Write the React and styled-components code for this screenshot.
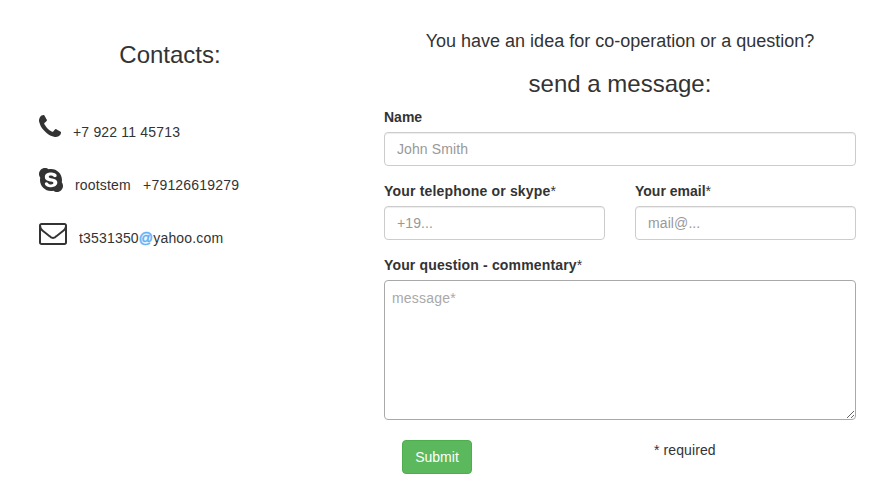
import React from "react";
import styled, { createGlobalStyle } from "styled-components";
import { FaSkype } from "react-icons/fa";

const GlobalStyle = createGlobalStyle`
  *, *::before, *::after { box-sizing: border-box; }
  body {
    margin: 0;
    background: #fff;
    color: #333;
    font-family: "Liberation Sans", Arial, sans-serif;
    font-size: 14px;
    line-height: 20px;
  }
`;

const Page = styled.main`
  display: grid;
  grid-template-columns: 262px 472px;
  column-gap: 83px;
  padding-left: 39px;
  height: 488px;
  overflow: hidden;
`;

const Contacts = styled.section`
  padding-top: 42px;
`;

const Heading = styled.h3`
  margin: 0;
  font-size: 24px;
  font-weight: 400;
  line-height: 26px;
  text-align: center;
`;

const Lead = styled.h4`
  margin: 0 0 20px;
  font-size: 18px;
  font-weight: 400;
  line-height: 20px;
  text-align: center;
`;

const ContactList = styled.ul`
  list-style: none;
  margin: 45px 0 0;
  padding: 0;
`;

const ContactRow = styled.li`
  display: flex;
  align-items: flex-start;
  gap: 12px;
  height: 53px;
`;

const Glyph = styled.svg`
  display: block;
  flex: none;
  width: ${(p) => p.$width}px;
  height: 28px;
  fill: currentColor;
`;

const SkypeGlyph = styled(FaSkype)`
  flex: none;
  width: 24px;
  height: 28px;
`;

const ContactText = styled.span`
  padding-top: 9px;
  letter-spacing: 0.18px;
  white-space: pre;
`;

const At = styled.span`
  color: #4ba6f5;
  -webkit-text-stroke: 0.5px #6db8f8;
  text-shadow: 0 0 2px #b5dafb;
`;

const Form = styled.form`
  padding-top: 31px;
`;

const Fields = styled.div`
  padding-top: 10px;
`;

const FieldRow = styled.div`
  display: grid;
  grid-template-columns: 1fr 1fr;
  column-gap: 30px;
`;

const Field = styled.div`
  display: flex;
  flex-direction: column;
  margin-bottom: 15px;
`;

const Label = styled.label`
  margin-bottom: 5px;
  font-weight: 700;
  letter-spacing: ${(p) => p.$tracking || 0}px;
`;

const Star = styled.span`
  font-weight: 400;
`;

const Input = styled.input`
  width: 100%;
  height: 34px;
  padding: 6px 12px;
  border: 1px solid #ccc;
  border-radius: 4px;
  box-shadow: inset 0 1px 1px rgba(0, 0, 0, 0.075);
  background: #fff;
  color: #555;
  font: inherit;
  letter-spacing: 0.1px;
  &::placeholder { color: #999; opacity: 1; }
`;

const Message = styled.textarea`
  display: block;
  width: 100%;
  height: 140px;
  padding: 7px;
  border: 1px solid #a9a9a9;
  border-radius: 4px;
  background: #fff;
  font: inherit;
  letter-spacing: 0.2px;
  resize: both;
  &::placeholder { color: #a9a9a9; opacity: 1; }
`;

const Footer = styled.div`
  display: flex;
  align-items: flex-start;
  padding: 5px 0 0 18px;
`;

const Submit = styled.button`
  width: 70px;
  height: 34px;
  padding: 6px 0;
  border: 1px solid #4cae4c;
  border-radius: 4px;
  background: #5cb85c;
  color: #fff;
  font: inherit;
`;

const Required = styled.span`
  margin-left: 182px;
  letter-spacing: 0.1px;
`;

const PhoneIcon = () => (
  <Glyph $width={22} viewBox="0 0 1408 1792">
    <path d="M1408 1240q0 27-10 70.5t-21 68.5q-21 50-122 106-94 51-186 51-27 0-53-3.5t-57.5-12.5-47-14.5-55.5-20.5-49-18q-98-35-175-83-127-79-264-216t-216-264q-48-77-83-175-3-9-18-49t-20.5-55.5-14.5-47-12.5-57.5-3.5-53q0-92 51-186 56-101 106-122 25-11 68.5-21t70.5-10q14 0 21 3 18 6 53 76 11 19 30 54t35 63.5 31 53.5q3 4 17.5 25t21.5 35.5 7 28.5q0 20-28.5 50t-62 55-62 53-28.5 46q0 9 5 22.5t8.5 20.5 14 24 11.5 19q76 137 174 235t235 174q2 1 19 11.5t24 14 20.5 8.5 22.5 5q18 0 46-28.5t53-62 55-62 50-28.5q14 0 28.5 7t35.5 21.5 25 17.5q25 15 53.5 31t63.5 35 54 30q70 35 76 53 3 7 3 21z" />
  </Glyph>
);

const EnvelopeIcon = () => (
  <Glyph $width={28} viewBox="0 0 1792 1792">
    <path d="M1664 1504v-768q-32 36-69 66-268 206-426 338-51 43-83 67t-86.5 48.5-102.5 24.5h-2q-48 0-102.5-24.5t-86.5-48.5-83-67q-158-132-426-338-37-30-69-66v768q0 13 9.5 22.5t22.5 9.5h1472q13 0 22.5-9.5t9.5-22.5zm0-1051v-24.5l-.5-13-3-12.5-5.5-9-9-7.5-14-2.5h-1472q-13 0-22.5 9.5t-9.5 22.5q0 168 147 284 193 152 401 317 6 5 35 29.5t46 37.5 44.5 31.5 50.5 27.5 43 9h2q20 0 43-9t50.5-27.5 44.5-31.5 46-37.5 35-29.5q208-165 401-317 54-43 100.5-115.5t46.5-131.5zm128-37v1088q0 66-47 113t-113 47h-1472q-66 0-113-47t-47-113v-1088q0-66 47-113t113-47h1472q66 0 113 47t47 113z" />
  </Glyph>
);

export default function App() {
  return (
    <>
      <GlobalStyle />
      <Page>
        <Contacts>
          <Heading>Contacts:</Heading>
          <ContactList>
            <ContactRow>
              <PhoneIcon />
              <ContactText>+7 922 11 45713</ContactText>
            </ContactRow>
            <ContactRow>
              <SkypeGlyph />
              <ContactText>{"rootstem \u00a0 +79126619279"}</ContactText>
            </ContactRow>
            <ContactRow>
              <EnvelopeIcon />
              <ContactText>
                t3531350<At>@</At>yahoo.com
              </ContactText>
            </ContactRow>
          </ContactList>
        </Contacts>
        <Form onSubmit={(e) => e.preventDefault()}>
          <Lead>You have an idea for co-operation or a question?</Lead>
          <Heading>send a message:</Heading>
          <Fields>
            <Field>
              <Label htmlFor="name">Name</Label>
              <Input id="name" placeholder="John Smith" />
            </Field>
            <FieldRow>
              <Field>
                <Label htmlFor="phone" $tracking={0.18}>Your telephone or skype<Star>*</Star></Label>
                <Input id="phone" placeholder="+19..." />
              </Field>
              <Field>
                <Label htmlFor="email">Your email<Star>*</Star></Label>
                <Input id="email" placeholder="mail@..." />
              </Field>
            </FieldRow>
            <Field>
              <Label htmlFor="message" $tracking={0.15}>Your question - commentary<Star>*</Star></Label>
              <Message id="message" placeholder="message*" />
            </Field>
          </Fields>
          <Footer>
            <Submit type="submit">Submit</Submit>
            <Required>* required</Required>
          </Footer>
        </Form>
      </Page>
    </>
  );
}
